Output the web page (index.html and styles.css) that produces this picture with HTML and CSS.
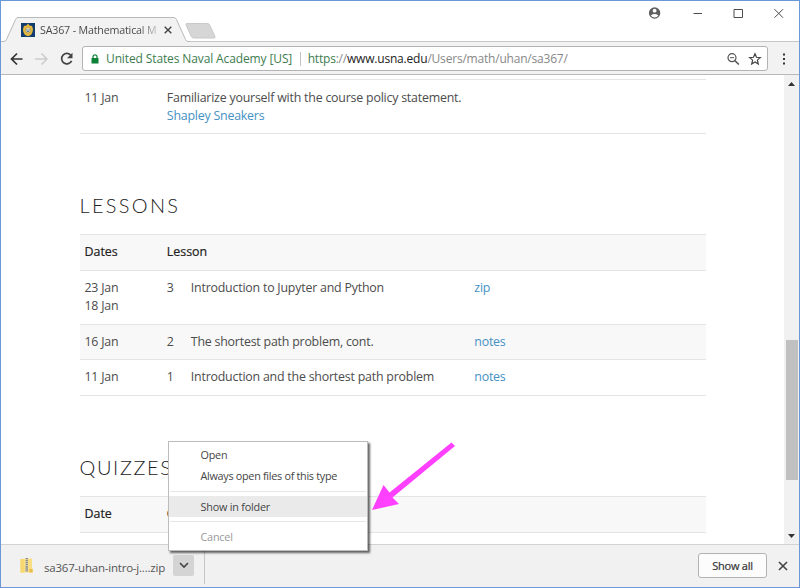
FILE: index.html
```html
<!DOCTYPE html>
<html lang="en">
<head>
<meta charset="utf-8">
<title>SA367 - Mathematical Modeling</title>
<link rel="stylesheet" href="styles.css">
</head>
<body>
<div class="window">
  <header class="titlebar">
    <div class="tab">
      <svg class="tab-shape" width="190" height="26" viewBox="0 0 190 26"><path d="M0 24.5H4Q5.500 24.500 6.500 22.500L15.500 2.500Q16.500 .5 18 .5H174Q175.500 .5 176.500 2.500L185.500 22.500Q186.500 24.500 188 24.500H190V26H0Z" fill="#f2f2f2"/><path d="M0 24.5H4Q5.500 24.500 6.500 22.500L15.500 2.500Q16.500 .5 18 .5H174Q175.500 .5 176.500 2.500L185.500 22.500Q186.500 24.500 188 24.500H190" fill="none" stroke="#b9b9b9"/></svg>
      <svg class="favicon" width="14" height="14" viewBox="0 0 14 14"><path fill="#123c70" d="M0 0h14v14H0z"/><path d="M7 .5 8.500 2.500 11 3 12 6 11.500 9 10 12 7 13.300 4 12 2.300 9 2 6 3 3 5.500 2.500Z" fill="#e6b83c"/><circle cx="7" cy="7.300" r="2.700" fill="#f4edc8" stroke="#a5842f" stroke-width=".7"/><path d="M6 6v2.500h2V6" fill="none" stroke="#3c648b" stroke-width=".8"/></svg>
      <span class="tab-title">SA367 - Mathematical M</span>
      <svg class="tab-close" width="8" height="8" viewBox="0 0 8 8"><path d="M.7.7 7.300 7.300M7.300.7.7 7.300" stroke="#444" stroke-width="1.400"/></svg>
    </div>
    <svg class="new-tab" width="32" height="16" viewBox="0 0 32 16"><path d="M2 .5H22.500Q24 .5 24.700 2L30 13.500Q30.500 15 29 15H9Q7 15 6.300 13.500L1 2Q.5.500 2 .5Z" fill="#d6d6d6" stroke="#c9c9c9"/></svg>
    <svg class="win-buttons" width="140" height="16" viewBox="0 0 140 16"><circle cx="6.600" cy="8" r="5.700" fill="#606060"/><circle cx="6.600" cy="5.700" r="1.900" fill="#fff"/><path d="M2.800 10.400Q6.600 7.600 10.400 10.400 9 12.400 6.600 12.400T2.800 10.400Z" fill="#fff"/><path d="M45.500 8.500H54M86 4.500H94.500V12.500H86ZM126.500 4.200 135 12.700M135 4.200 126.500 12.700" fill="none" stroke="#4c4c4c"/></svg>
  </header>
  <div class="toolbar">
    <svg class="nav" width="66" height="16" viewBox="0 0 66 16"><path d="M12.500 8H2M7 2.500 1.500 8 7 13.500" fill="none" stroke="#333" stroke-width="1.700"/><path d="M25 8H36.500M31.500 2.500 37 8 31.500 13.500" fill="none" stroke="#ccc" stroke-width="1.500"/><path d="M61 4.500A5.200 5.200 0 1 0 61.600 9.800" fill="none" stroke="#444" stroke-width="1.700"/><path d="M62.500 1.800V7.300H57Z" fill="#444"/></svg>
    <div class="omnibox">
      <svg class="lock" width="8" height="10" viewBox="0 0 8 10"><path d="M.5 4h7v5.500h-7z" fill="#0b8037"/><path d="M2 4.500V2.800a2 2 0 0 1 4 0v1.700" fill="none" stroke="#0b8037" stroke-width="1.200"/></svg>
      <span class="owner">United States Naval Academy [US]</span>
      <span class="sep"></span>
      <span class="url"><span class="scheme">https</span>://<span class="host">www.usna.edu</span>/Users/math/uhan/sa367/</span>
      <svg class="box-icons" width="36" height="14" viewBox="0 0 36 14"><circle cx="5" cy="5.700" r="4" fill="none" stroke="#555" stroke-width="1.200"/><path d="M3 5.700H7" stroke="#555"/><path d="M8 8.700 11.800 12.500" stroke="#555" stroke-width="1.600"/><path d="M28 1.700 29.500 5.300 33.300 5.600 30.400 8.100 31.300 12 28 9.900 24.700 12 25.600 8.100 22.700 5.600 26.500 5.300Z" fill="none" stroke="#444" stroke-width="1.200"/></svg>
    </div>
    <svg class="more" width="4" height="14" viewBox="0 0 4 14"><path d="M1 1.500h2v2H1zM1 6h2v2H1zM1 10.500h2v2H1z" fill="#333"/></svg>
  </div>
  <div class="viewport">
    <main class="page">
      <div class="table news">
        <div class="row"><span>11 Jan</span><span class="wide">Familiarize yourself with the course policy statement.<br><a class="link">Shapley Sneakers</a></span></div>
      </div>
      <h2>LESSONS</h2>
      <div class="table">
        <div class="row head"><span>Dates</span><span class="wide">Lesson</span></div>
        <div class="row"><span>23 Jan<br>18 Jan</span><span>3</span><span>Introduction to Jupyter and Python</span><a class="link">zip</a></div>
        <div class="row shaded"><span>16 Jan</span><span>2</span><span>The shortest path problem, cont.</span><a class="link">notes</a></div>
        <div class="row"><span>11 Jan</span><span>1</span><span>Introduction and the shortest path problem</span><a class="link">notes</a></div>
      </div>
      <h2 class="quizzes">QUIZZES</h2>
      <div class="table">
        <div class="row head"><span>Date</span><span class="wide">Quiz</span></div>
      </div>
    </main>
    <div class="scrollbar">
      <svg width="7" height="4" viewBox="0 0 7 4"><path d="M3.500 0 7 4H0Z" fill="#333"/></svg>
      <div class="thumb"></div>
      <svg width="7" height="4" viewBox="0 0 7 4"><path d="M0 0H7L3.500 4Z" fill="#333"/></svg>
    </div>
  </div>
  <footer class="shelf">
    <svg class="zip-icon" width="13" height="16" viewBox="0 0 13 16"><path d="M.5 1 12 .5V10.500L13 11V14.500H.5Z" fill="#f9df82"/><path d="M.5 1 4 1V14.500H.5Z" fill="#f6d770"/><path d="M9.500 11H12.500V14.500H9.500z" fill="#e8bd49"/><path d="M5.500 0H8V14H5.500z" fill="#cfcab4"/><path d="M6.800 0V9" stroke="#85837a" stroke-width="2" stroke-dasharray="1 1"/><path d="M5.500 8.500h2.500v5H5.500z" fill="#a9a799"/></svg>
    <span class="filename">sa367-uhan-intro-j....zip</span>
    <span class="drop"><svg width="10" height="7" viewBox="0 0 10 7"><path d="M1 1 5 5 9 1" fill="none" stroke="#444" stroke-width="1.600"/></svg></span>
    <span class="divider"></span>
    <span class="show-all">Show all</span>
    <svg class="shelf-close" width="10" height="10" viewBox="0 0 10 10"><path d="M1 1 9 9M9 1 1 9" stroke="#444" stroke-width="1.600"/></svg>
  </footer>
  <div class="menu">
    <div class="item">Open</div>
    <div class="item always">Always open files of this type</div>
    <div class="rule"></div>
    <div class="item active">Show in folder</div>
    <div class="rule"></div>
    <div class="item disabled">Cancel</div>
  </div>
  <svg class="arrow" width="84" height="70" viewBox="0 0 84 70"><path d="M0 69 11.500 44 17.500 51.500 79.500 1.500 83 5 20.500 56.500 27 63Z" fill="#ff40ff"/></svg>
</div>
</body>
</html>
```
FILE: styles.css
```css
* { box-sizing: border-box; }
body { margin: 0; font-family: "Open Sans", sans-serif; }
svg { display: block; flex: none; }
.window { position: relative; display: flex; flex-direction: column; width: 800px; height: 588px; overflow: hidden; background: #fff; border: 1px solid #6a97da; }
.titlebar { display: flex; flex: none; align-items: flex-start; height: 42px; background: linear-gradient(#c6c6c6, #c6c6c6) 0 40px / 100% 1px no-repeat, linear-gradient(#f2f2f2, #f2f2f2) 0 41px / 100% 1px no-repeat; }
.tab { position: relative; display: flex; align-items: center; width: 190px; height: 26px; margin-top: 16px; padding-left: 19.500px; }
.tab-shape { position: absolute; left: -1px; top: 0; }
.favicon, .tab-close { position: relative; }
.tab-title { position: relative; width: 117.500px; margin-left: 5.500px; font-size: 10.700px; line-height: 16px; letter-spacing: -.18px; white-space: nowrap; background: linear-gradient(90deg, #444 84%, #ccc); background-clip: text; color: transparent; }
.tab-close { margin-left: 6.500px; }
.new-tab { margin: 22px 0 0 -6px; }
.win-buttons { margin: 4px 11px 0 auto; }
.toolbar { display: flex; flex: none; align-items: center; height: 32px; padding: 0 13.500px 0 9px; background: #f2f2f2; border-bottom: 1px solid #b9b9b9; }
.omnibox { display: flex; align-items: center; width: 686px; height: 25px; margin-left: 6px; padding: 0 4px 0 8px; background: #fff; border: 1px solid #b3b3b3; border-radius: 3px; font-size: 12px; line-height: 18px; white-space: nowrap; }
.owner { margin-left: 7px; letter-spacing: -.12px; color: #3e7c50; }
.sep { width: 1px; height: 14px; margin: 0 6.500px 0 8px; background: #c4c4c4; }
.url { letter-spacing: -.2px; color: #888; }
.scheme { color: #3e7c50; }
.host { color: #222; }
.box-icons { margin-left: auto; }
.more { margin-left: auto; }
.viewport { display: flex; flex: none; height: 468.500px; overflow: hidden; }
.page { width: 626px; margin-left: 78.500px; font-size: 12.400px; line-height: 18.600px; letter-spacing: -.215px; color: #4c4c4c; }
.table { border-top: 1px solid #e4e4e4; }
.news { margin-top: 4px; }
.news .row { padding: 8.500px 0 7.300px 5px; }
.row { display: grid; grid-template-columns: 82.300px 24px 283.500px 1fr; padding: 8px 0 7.800px 5px; border-bottom: 1px solid #e4e4e4; }
.wide { grid-column: 2 / -1; }
.head { padding-bottom: 8.300px; letter-spacing: 0; color: #222; background: #f8f8f8; -webkit-text-stroke: .2px #222; }
.shaded { background: #f8f8f8; }
.link { color: #4591c5; }
h2 { height: 30px; margin: 56px 0 14px; font: 300 20px/30px Lato, sans-serif; letter-spacing: 2.300px; color: #222; }
.quizzes { margin-top: 56.500px; letter-spacing: 1.600px; }
.scrollbar { display: flex; flex-direction: column; align-items: center; width: 15px; margin-left: auto; padding: 7px 0 6px; background: #f1f1f1; }
.thumb { width: 12px; height: 140px; margin: 254px 0 auto 1px; background: #c0c0c0; }
.shelf { display: flex; align-items: center; flex: 1; padding: 0 11px 0 19px; background: #f1f1f1; border-top: 1px solid #d2d2d2; }
.filename { width: 121px; margin: 4px 0 0 11px; font-size: 11.500px; line-height: 18px; letter-spacing: -.21px; color: #555; white-space: nowrap; }
.drop { display: flex; align-items: center; justify-content: center; width: 21px; height: 21px; margin-left: 8px; background: #d4d4d4; border-radius: 2px; }
.divider { width: 1px; height: 36px; margin-left: 10px; background: #c6c6c6; }
.show-all { display: flex; align-items: center; justify-content: center; width: 69px; height: 25px; margin: 0 11px 1px auto; background: #fcfcfc; border: 1px solid #b2b2b2; border-radius: 3px; font-size: 11px; letter-spacing: -.25px; color: #333; -webkit-text-stroke: .2px #333; }
.menu { position: absolute; left: 167px; top: 440px; width: 200px; height: 110px; padding-top: 3px; background: #fff; border: 1px solid #bcbcbc; box-shadow: 2px 2px 2px rgba(0, 0, 0, .6); font-size: 10.800px; letter-spacing: -.2px; color: #444; }
.item { height: 21px; padding-left: 31.500px; line-height: 19.500px; white-space: nowrap; }
.always { letter-spacing: -.28px; }
.rule { height: 1px; margin: 4px 1px; background: #e6e6e6; }
.active { line-height: 21px; background: #eaeaea; }
.disabled { line-height: 21px; color: #999; }
.arrow { position: absolute; left: 371px; top: 440px; }
```
